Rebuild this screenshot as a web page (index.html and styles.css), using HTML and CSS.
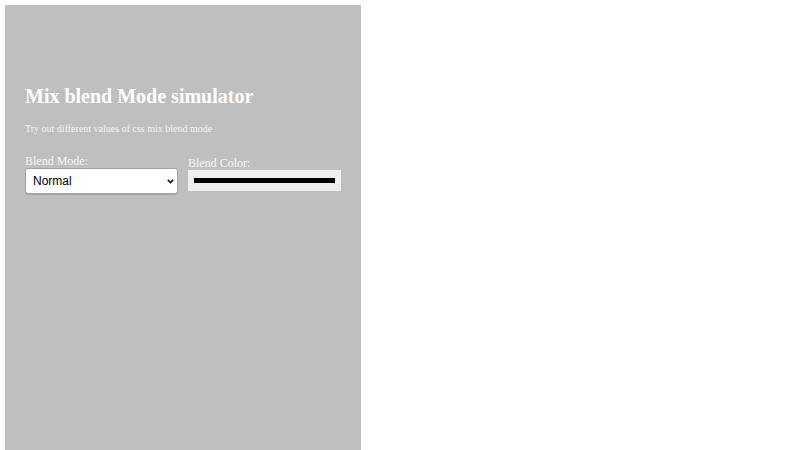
FILE: index.html
```html
<!DOCTYPE html>
<html lang="en">
<head>
<meta charset="utf-8">
<title>Mix blend Mode simulator</title>
<link rel="stylesheet" href="styles.css">
</head>
<body>
<main class="panel">
  <h1 class="title">Mix blend Mode simulator</h1>
  <p class="subtitle">Try out different values of css mix blend mode</p>
  <div class="controls">
    <div class="field">
      <label class="field-label" for="mode">Blend Mode:</label>
      <div class="select-wrap">
        <select id="mode" class="mode-select">
          <option>Normal</option>
          <option>Multiply</option>
          <option>Screen</option>
          <option>Overlay</option>
          <option>Darken</option>
          <option>Lighten</option>
        </select>
        <svg class="select-arrow" width="7" height="5" viewBox="0 0 7 5" aria-hidden="true">
          <path d="M0.8 0.8 L3.5 3.6 L6.2 0.8" fill="none" stroke="#111" stroke-width="1.6"/>
        </svg>
      </div>
    </div>
    <div class="field">
      <label class="field-label" for="color">Blend Color:</label>
      <input id="color" class="color-input" type="color" value="#000000">
    </div>
  </div>
</main>
</body>
</html>
```
FILE: styles.css
```css
html, body {
  margin: 0;
  padding: 0;
  background: #ffffff;
}

body {
  padding: 5px;
  font-family: "Liberation Serif", "Times New Roman", serif;
}

.panel {
  box-sizing: border-box;
  width: 356px;
  min-height: 460px;
  background: #bfbfbf;
  padding: 80px 20px 20px;
  color: #ffffff;
}

.title {
  margin: 0;
  font-size: 20px;
  line-height: 23px;
  font-weight: bold;
}

.subtitle {
  margin: 15px 0 0;
  font-size: 10px;
  line-height: 11.5px;
  color: #f4f4f4;
}

.controls {
  display: flex;
  align-items: center;
  gap: 10px;
  margin-top: 19px;
}

.field {
  flex: 1;
  display: flex;
  flex-direction: column;
}

.field-label {
  font-size: 12px;
  line-height: 14px;
  color: #f6f6f6;
}

.select-wrap {
  position: relative;
  display: flex;
}

.mode-select {
  box-sizing: border-box;
  -webkit-appearance: none;
  appearance: none;
  width: 100%;
  height: 26px;
  margin: 0;
  padding: 0 16px 0 7px;
  font-family: "Liberation Sans", Arial, sans-serif;
  font-size: 12px;
  color: #000000;
  background: #ffffff;
  border: 1px solid #a3a3a3;
  border-radius: 3px;
  box-shadow: 0 1px 0 rgba(0, 0, 0, 0.12);
}

.select-arrow {
  position: absolute;
  right: 4px;
  top: 11px;
  pointer-events: none;
}

.color-input {
  box-sizing: border-box;
  width: 100%;
  height: 21px;
  margin: 0;
  padding: 0;
  border: none;
  background: #efefef;
  cursor: pointer;
}

.color-input::-webkit-color-swatch-wrapper {
  padding: 8px 6px;
}

.color-input::-webkit-color-swatch {
  border: none;
  border-radius: 0;
}
```
